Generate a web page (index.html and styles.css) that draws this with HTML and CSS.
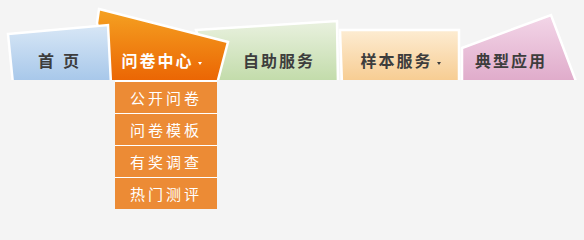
FILE: index.html
```html
<!DOCTYPE html>
<html lang="zh">
<head>
<meta charset="utf-8">
<title>导航</title>
<link rel="stylesheet" href="styles.css">
</head>
<body>
<nav class="nav">
  <svg class="nav-bg" width="584" height="80" viewBox="0 0 584 80" aria-hidden="true">
    <defs>
      <linearGradient id="gBlue" gradientUnits="userSpaceOnUse" x1="0" y1="25" x2="0" y2="80">
        <stop offset="0" stop-color="#d8e7f6"/>
        <stop offset="1" stop-color="#a8c8ea"/>
      </linearGradient>
      <linearGradient id="gOrange" gradientUnits="userSpaceOnUse" x1="0" y1="9" x2="0" y2="80">
        <stop offset="0" stop-color="#f5a222"/>
        <stop offset="1" stop-color="#eb6604"/>
      </linearGradient>
      <linearGradient id="gGreen" gradientUnits="userSpaceOnUse" x1="0" y1="21" x2="0" y2="80">
        <stop offset="0" stop-color="#e9f1df"/>
        <stop offset="1" stop-color="#c3dcab"/>
      </linearGradient>
      <linearGradient id="gPeach" gradientUnits="userSpaceOnUse" x1="0" y1="30" x2="0" y2="80">
        <stop offset="0" stop-color="#fdecd2"/>
        <stop offset="1" stop-color="#f7cd93"/>
      </linearGradient>
      <linearGradient id="gPink" gradientUnits="userSpaceOnUse" x1="0" y1="15" x2="0" y2="80">
        <stop offset="0" stop-color="#f3d6e8"/>
        <stop offset="1" stop-color="#e0accb"/>
      </linearGradient>
    </defs>
    <g stroke="#ffffff" stroke-width="2.5" stroke-linejoin="miter">
      <polygon points="462,48 551,15 577,84 462,84" fill="url(#gPink)"/>
      <polygon points="340,30 459,30 459,84 342,84" fill="url(#gPeach)"/>
      <polygon points="196,30 337,21 338,84 214,84" fill="url(#gGreen)"/>
      <polygon points="99,9 228,42 217,84 111,84 97,23" fill="url(#gOrange)"/>
      <polygon points="8,34 108,25 111,84 13,84" fill="url(#gBlue)"/>
    </g>
  </svg>
  <ul class="tabs">
    <li class="tab tab-home">首 页</li>
    <li class="tab tab-survey tab-active">问卷中心<span class="caret"></span></li>
    <li class="tab tab-self">自助服务</li>
    <li class="tab tab-sample">样本服务<span class="caret"></span></li>
    <li class="tab tab-apps">典型应用</li>
  </ul>
</nav>
<ul class="dropdown">
  <li class="dropdown-item">公开问卷</li>
  <li class="dropdown-item">问卷模板</li>
  <li class="dropdown-item">有奖调查</li>
  <li class="dropdown-item">热门测评</li>
</ul>
</body>
</html>
```
FILE: styles.css
```css
html, body {
  margin: 0;
  padding: 0;
  background: #f4f4f4;
}

body {
  font-family: "Noto Sans CJK SC", "Noto Sans", sans-serif;
}

.nav {
  position: relative;
  height: 80px;
}

.nav-bg {
  position: absolute;
  left: 0;
  top: 0;
  display: block;
}

.tabs {
  position: relative;
  display: flex;
  margin: 0;
  padding: 52px 0 0 0;
  list-style: none;
}

.tab {
  font-size: 16px;
  font-weight: bold;
  line-height: 16px;
  letter-spacing: 2px;
  color: #3d3d3d;
  text-align: center;
  white-space: nowrap;
}

.tab-home {
  margin-left: 8px;
  width: 103px;
  word-spacing: 1.5px;
}

.tab-survey {
  width: 101px;
}

.tab-self {
  width: 134px;
}

.tab-sample {
  width: 109px;
}

.tab-apps {
  width: 112px;
}

.tab-active {
  color: #ffffff;
}

.caret {
  display: inline-block;
  width: 0;
  height: 0;
  margin-left: 4px;
  border-left: 2.5px solid transparent;
  border-right: 2.5px solid transparent;
  border-top: 3px solid currentColor;
  vertical-align: 2px;
}

.dropdown {
  margin: 0 0 0 115px;
  padding: 0;
  width: 102px;
  list-style: none;
  border-top: 2px solid #ffffff;
}

.dropdown-item {
  height: 31px;
  line-height: 31px;
  background: #ec8b35;
  color: #ffffff;
  font-size: 15px;
  letter-spacing: 3px;
  text-align: center;
  border-bottom: 1px solid #ffffff;
}

.dropdown-item:last-child {
  border-bottom: none;
}
```
